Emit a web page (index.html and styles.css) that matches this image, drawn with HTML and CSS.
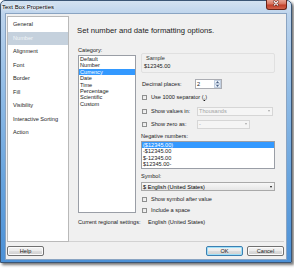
FILE: index.html
```
<!DOCTYPE html>
<html>
<head>
<meta charset="utf-8">
<link rel="stylesheet" href="styles.css">
</head>
<body>
<div class="window">
  <div class="titlebar">
    <span class="title">Text Box Properties</span>
    <span class="close"><svg width="21" height="9" viewBox="0 0 21 9"><path d="M8.6 2.4 L12.4 6.2 M12.4 2.4 L8.6 6.2" stroke="#5a1a10" stroke-width="2.4" stroke-linecap="round"/><path d="M8.6 2.4 L12.4 6.2 M12.4 2.4 L8.6 6.2" stroke="#ffffff" stroke-width="1.3" stroke-linecap="round"/></svg></span>
  </div>
  <div class="client">
    <div class="main">
      <ul class="nav">
        <li>General</li>
        <li class="sel">Number</li>
        <li>Alignment</li>
        <li>Font</li>
        <li>Border</li>
        <li>Fill</li>
        <li>Visibility</li>
        <li>Interactive Sorting</li>
        <li>Action</li>
      </ul>
      <div class="content">
        <h1 class="heading">Set number and date formatting options.</h1>
        <div class="columns">
          <div class="col-left">
            <div class="label">Category:</div>
            <ul class="listbox cat">
              <li>Default</li>
              <li>Number</li>
              <li class="sel">Currency</li>
              <li>Date</li>
              <li>Time</li>
              <li>Percentage</li>
              <li>Scientific</li>
              <li>Custom</li>
            </ul>
          </div>
          <div class="col-right">
            <div class="sample">
              <div class="sample-title">Sample</div>
              <div class="sample-value">$12345.00</div>
            </div>
            <div class="row dec">
              <span class="dec-label">Decimal places:</span>
              <div class="spin">
                <span class="spin-val">2</span>
                <span class="spin-btns">
                  <span class="spin-btn"><svg width="3" height="2" viewBox="0 0 3 2"><path d="M0 2 L1.5 0 L3 2 Z" fill="#4d6185"/></svg></span>
                  <span class="spin-btn"><svg width="3" height="2" viewBox="0 0 3 2"><path d="M0 0 L1.5 2 L3 0 Z" fill="#4d6185"/></svg></span>
                </span>
              </div>
            </div>
            <div class="row r1000">
              <span class="cb"></span>
              <span class="cb-text">Use 1000 separator (<u>,</u>)</span>
            </div>
            <div class="row rshow">
              <span class="cb"></span>
              <span class="cb-text cb-fixed">Show values in:</span>
              <div class="dd disabled dd-values"><span class="dd-text">Thousands</span><span class="arrow"></span></div>
            </div>
            <div class="row rzero">
              <span class="cb"></span>
              <span class="cb-text cb-fixed">Show zero as:</span>
              <div class="dd disabled dd-zero"><span class="dd-text">-</span><span class="arrow"></span></div>
            </div>
            <div class="label neg-label">Negative numbers:</div>
            <ul class="listbox neg">
              <li class="sel">($12345.00)</li>
              <li>-$12345.00</li>
              <li>$-12345.00</li>
              <li>$12345.00-</li>
            </ul>
            <div class="label sym-label">Symbol:</div>
            <div class="dd dd-symbol"><span class="dd-text">$ English (United States)</span><span class="arrow"></span></div>
            <div class="row rafter">
              <span class="cb"></span>
              <span class="cb-text">Show symbol after value</span>
            </div>
            <div class="row rspace">
              <span class="cb"></span>
              <span class="cb-text">Include a space</span>
            </div>
          </div>
        </div>
        <div class="regional">
          <span class="regional-label">Current regional settings:</span>
          <span>English (United States)</span>
        </div>
      </div>
    </div>
    <div class="footer">
      <button class="btn">Help</button>
      <span class="spacer"></span>
      <button class="btn default">OK</button>
      <button class="btn">Cancel</button>
    </div>
  </div>
</div>
</body>
</html>
```
FILE: styles.css
```
* { box-sizing: border-box; }
html, body { margin: 0; padding: 0; background: #ffffff; }
body {
  font-family: "Liberation Sans", Arial, sans-serif;
  font-size: 5.6px;
  color: #1a1a1a;
  width: 294px;
  height: 268px;
  overflow: hidden;
}
ul { list-style: none; margin: 0; padding: 0; }

.window {
  width: 292px;
  height: 263px;
  border: 1px solid #3b5675;
  border-radius: 5px 5px 0 0;
  background: linear-gradient(180deg, #d3e2f1 0px, #bcd3ec 14px, #96bfe7 80px, #67a3dd 180px, #4b90d6 263px);
  box-shadow: 2px 2px 3px rgba(0, 0, 0, 0.55);
  padding: 0 4px 2px 4px;
  display: flex;
  flex-direction: column;
}

.titlebar {
  height: 12px;
  display: flex;
  align-items: flex-start;
  justify-content: space-between;
}
.title {
  margin-top: 3px;
  margin-left: -3px;
  font-size: 6px;
  line-height: 7px;
  color: #000;
  text-shadow: 0 0 2px #fff, 0 0 3px #fff, 0 0 4px #fff;
}
.close {
  width: 21px;
  height: 10px;
  margin-top: -1px;
  margin-right: 0px;
  border: 1px solid #6a2418;
  border-top: none;
  border-radius: 0 0 3px 3px;
  background: linear-gradient(180deg, #e8a493 0%, #d7745f 45%, #c2402a 55%, #d0624a 100%);
  display: flex;
}
.close svg { display: block; margin-top: -1px; margin-left: -1px; }

.client {
  flex: 1;
  background: #f0f0f0;
  border: 1px solid #8aa4c2;
  display: flex;
  flex-direction: column;
}

.main {
  display: flex;
  flex: 1;
}

.nav {
  width: 62px;
  height: 226px;
  margin: 2px 0 0 1px;
  background: #ffffff;
  border: 1px solid #b9b9b9;
  padding-top: 1px;
}
.nav li {
  height: 13.5px;
  line-height: 13.5px;
  padding-left: 5px;
  color: #1e1e1e;
  white-space: nowrap;
}
.nav li.sel {
  background: #c5d1dd;
  color: #f2f5f8;
}

.content {
  flex: 1;
  margin-top: 2px;
  margin-right: 2px;
  padding-left: 9px;
  border-bottom: 1px solid #d2d2d2;
  display: flex;
  flex-direction: column;
}

.heading {
  margin: 9.5px 0 0 -1px;
  font-size: 7.7px;
  line-height: 9px;
  font-weight: normal;
  color: #1c1c1c;
  white-space: nowrap;
}

.columns {
  display: flex;
  gap: 5px;
  margin-top: 12.5px;
}
.col-left { width: 58px; }
.col-right { width: 134px; display: flex; flex-direction: column; }

.label {
  height: 7px;
  line-height: 7px;
  white-space: nowrap;
}

.listbox {
  background: #ffffff;
  border: 1px solid #9a9ea6;
}
.listbox li {
  height: 6.4px;
  line-height: 6.4px;
  padding-left: 1px;
  white-space: nowrap;
}
.listbox li.sel {
  background: #3399ff;
  color: #ffffff;
}
.cat {
  margin-top: 1px;
  height: 158px;
}

.sample {
  margin-top: 6px;
  height: 20px;
  border: 1px solid #e0e0e0;
  border-radius: 2px;
  padding: 1px 0 0 2px;
}
.sample-title {
  height: 7px;
  line-height: 7px;
  margin-left: 2px;
  color: #333;
}
.sample-value {
  margin-top: 1px;
  height: 7px;
  line-height: 7px;
}

.row {
  display: flex;
  align-items: center;
  height: 9px;
  white-space: nowrap;
}
.dec { margin-top: 6px; height: 10px; }
.dec-label { width: 54px; padding-left: 1px; }
.spin {
  width: 27px;
  height: 10px;
  border: 1px solid #abadb3;
  background: #ffffff;
  display: flex;
  align-items: center;
  justify-content: space-between;
}
.spin-val { padding-left: 1px; }
.spin-btns {
  display: flex;
  flex-direction: column;
  width: 7px;
  height: 8px;
  gap: 0;
}
.spin-btn {
  flex: 1;
  border: 1px solid #c2cfe0;
  background: linear-gradient(180deg, #f4f8fc, #dfe8f3);
  display: flex;
  align-items: center;
  justify-content: center;
}
.spin-btn svg { display: block; }

.r1000 { margin-top: 3.5px; }
.rshow { margin-top: 5px; }
.rzero { margin-top: 4px; }
.rafter { margin-top: 3.5px; }
.rspace { margin-top: 2px; }

.cb {
  width: 5px;
  height: 5px;
  margin-left: 1px;
  margin-right: 4px;
  border: 1px solid #8e8f8f;
  background: linear-gradient(135deg, #e4e4e4, #f7f7f7);
  flex: none;
}
.cb-fixed { width: 46px; }

.dd {
  height: 9px;
  border: 1px solid #a9a9a9;
  background: linear-gradient(180deg, #f7f7f7, #e6e6e6);
  display: flex;
  align-items: center;
  justify-content: space-between;
  padding: 0 2px 0 1px;
}
.dd.disabled {
  border-color: #d6d6d6;
  background: #f5f5f5;
  color: #a3a3a3;
}
.arrow {
  width: 0;
  height: 0;
  border-left: 1.5px solid transparent;
  border-right: 1.5px solid transparent;
  border-top: 2px solid #111;
}
.dd.disabled .arrow { border-top-color: #a8a8a8; }
.dd-values { width: 76px; }
.dd-zero { width: 53px; }

.neg-label { margin-top: 4.5px; }
.neg {
  margin-top: 1px;
  height: 27.6px;
}
.sym-label { margin-top: 4px; }
.dd-symbol { margin-top: 2.5px; width: 134px; }
.dd-symbol .dd-text { color: #000; }

.regional {
  margin-top: 4px;
  height: 7px;
  line-height: 7px;
  display: flex;
  white-space: nowrap;
}
.regional-label { width: 70px; }

.footer {
  display: flex;
  padding: 4px 2px 3px 1px;
  gap: 4px;
}
.spacer { flex: 1; }
.btn {
  width: 37px;
  height: 10px;
  margin: 0;
  padding: 0;
  font-family: "Liberation Sans", Arial, sans-serif;
  font-size: 5.6px;
  line-height: 8px;
  color: #1a1a1a;
  border: 1px solid #707070;
  border-radius: 2px;
  background: linear-gradient(180deg, #f2f2f2 0%, #ebebeb 50%, #dddddd 51%, #cfcfcf 100%);
  box-shadow: inset 0 0 0 1px #fbfbfb;
}
.btn.default {
  border-color: #3c7fb1;
  box-shadow: inset 0 0 0 1px #9fe0f8;
}
```
